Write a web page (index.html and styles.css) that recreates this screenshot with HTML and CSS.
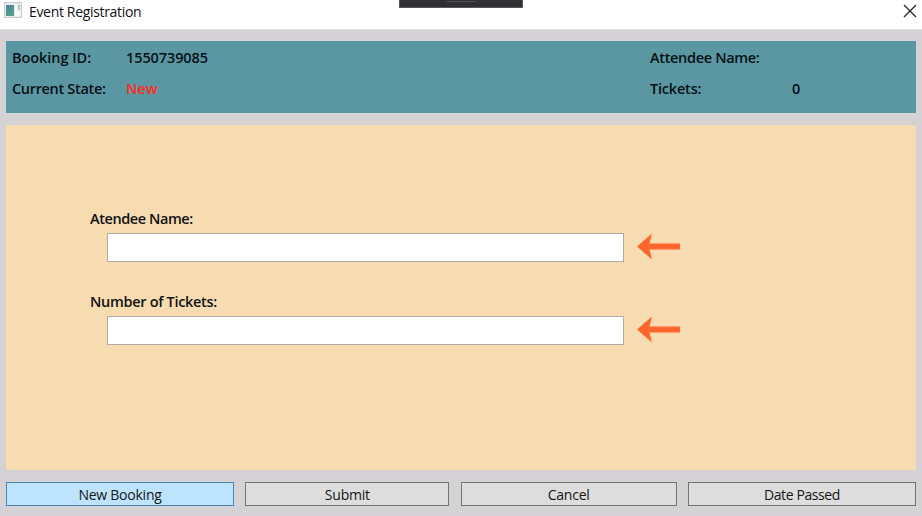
FILE: index.html
```
<!DOCTYPE html>
<html lang="en">
<head>
<meta charset="utf-8">
<title>Event Registration</title>
<link rel="stylesheet" href="styles.css">
</head>
<body>
<div class="window">
  <header class="titlebar">
    <svg class="app-icon" width="18" height="16" viewBox="0 0 18 16">
      <defs><linearGradient id="pane" x1="0" y1="0" x2="1" y2="1"><stop offset="0" stop-color="#4a83a0"/><stop offset="1" stop-color="#55a384"/></linearGradient></defs>
      <rect x=".5" y=".5" width="17" height="15" fill="#e9eced" stroke="#c9cccf"/>
      <rect x="2" y="3" width="8" height="11" fill="url(#pane)"/>
      <rect x="11" y="3" width="2" height="5" fill="#fff"/>
      <rect x="14" y="3" width="2" height="5" fill="#a9cbc8"/>
      <rect x="11" y="9" width="5" height="5" fill="#f7f8f8"/>
    </svg>
    <h1 class="title"><span class="t-title">Event Registration</span></h1>
    <svg class="close" width="14" height="14" viewBox="0 0 14 14"><path d="M1 1L13 13M13 1L1 13" fill="none" stroke="#222" stroke-width="1.3"/></svg>
    <div class="toolbar-tab"><i></i></div>
  </header>
  <section class="summary">
    <span class="t-id">Booking ID:</span><span class="t-num">1550739085</span><span class="t-attendee">Attendee Name:</span><span></span>
    <span class="t-state">Current State:</span><span class="state">New</span><span class="t-tickets">Tickets:</span><span class="count">0</span>
  </section>
  <main class="form">
    <label class="field">
      <span class="label t-name">Atendee Name:</span>
      <span class="row"><input type="text"><svg width="44" height="28" viewBox="0 0 44 28"><path d="M0 13.5L15 .5L12.5 10.5H43V16.5H12.5L15 26.5Z" fill="#ff672b"/></svg></span>
    </label>
    <label class="field">
      <span class="label t-number">Number of Tickets:</span>
      <span class="row"><input type="text"><svg width="44" height="28" viewBox="0 0 44 28"><path d="M0 13.5L15 .5L12.5 10.5H43V16.5H12.5L15 26.5Z" fill="#ff672b"/></svg></span>
    </label>
  </main>
  <footer class="actions">
    <button class="active"><span class="t-new">New Booking</span></button>
    <button><span class="t-submit">Submit</span></button>
    <button><span class="t-cancel">Cancel</span></button>
    <button><span class="t-passed">Date Passed</span></button>
  </footer>
</div>
</body>
</html>
```
FILE: styles.css
```
* { box-sizing: border-box; }
body { margin: 0; font-family: "Open Sans", "Noto Sans", sans-serif; font-size: 14.5px; color: #111; }
.window { width: 922px; height: 516px; background: #d4d2d4; overflow: hidden; }
.titlebar { position: relative; display: flex; height: 30px; padding: 2px 6px 0 4px; background: #fff; border-bottom: 1px solid #e6e5e6; }
.title { margin: 0 auto 0 7px; font-size: 14px; font-weight: 400; line-height: 20px; white-space: nowrap; }
.close { margin-top: 2px; margin-right: -1px; }
.toolbar-tab { position: absolute; left: 399px; top: 0; width: 124px; height: 8px; background: #303034; border: 1px solid #56565a; border-top: 0; }
.toolbar-tab i { display: block; width: 29px; height: 1px; margin: 1px auto 0; background: #505055; }
.summary { display: grid; grid-template-columns: 114px 524px 142px 1fr; grid-template-rows: 31px 31px; height: 72px; margin: 11px 6px 0; padding: 1px 0 0 6px; background: #5b97a2; color: #051014; font-weight: 600; line-height: 32px; white-space: nowrap; }
.summary span { justify-self: start; }
.summary .state { color: #ff2a1d; }
.form { height: 345px; margin: 12px 6px 0; padding: 84px 0 0 84px; background: #f7dcb2; }
.field { display: block; height: 83px; }
.label { display: table; height: 24px; line-height: 20px; font-weight: 600; white-space: nowrap; }
.row { display: flex; margin-left: 17px; gap: 13px; }
.row input { width: 517px; height: 29px; margin: 0; padding: 4px; border: 1px solid #b1aaa7; background: #fff; outline: 0; font: inherit; }
.actions { display: grid; grid-template-columns: 228px 204px 216px 228px; justify-content: space-between; height: 24px; margin: 12px 6px 0; }
button { display: flex; align-items: center; justify-content: center; height: 24px; padding: 0; border: 1px solid #737373; border-radius: 0; background: #dddddd; color: #151515; font: 400 14px "Open Sans", "Noto Sans", sans-serif; white-space: nowrap; }
button.active { background: #bee3ff; border-color: #4985b8; }
.t-title { letter-spacing: -.33px; }
.t-id { letter-spacing: -.05px; }
.t-num { letter-spacing: -.1px; }
.t-state, .t-attendee { letter-spacing: -.33px; }
.t-tickets { letter-spacing: -.2px; }
.t-name { letter-spacing: -.42px; }
.t-number { letter-spacing: -.31px; }
.t-new { letter-spacing: -.24px; }
.t-submit { letter-spacing: -.2px; }
.t-cancel { letter-spacing: -.25px; }
.t-passed { letter-spacing: -.4px; }
```
